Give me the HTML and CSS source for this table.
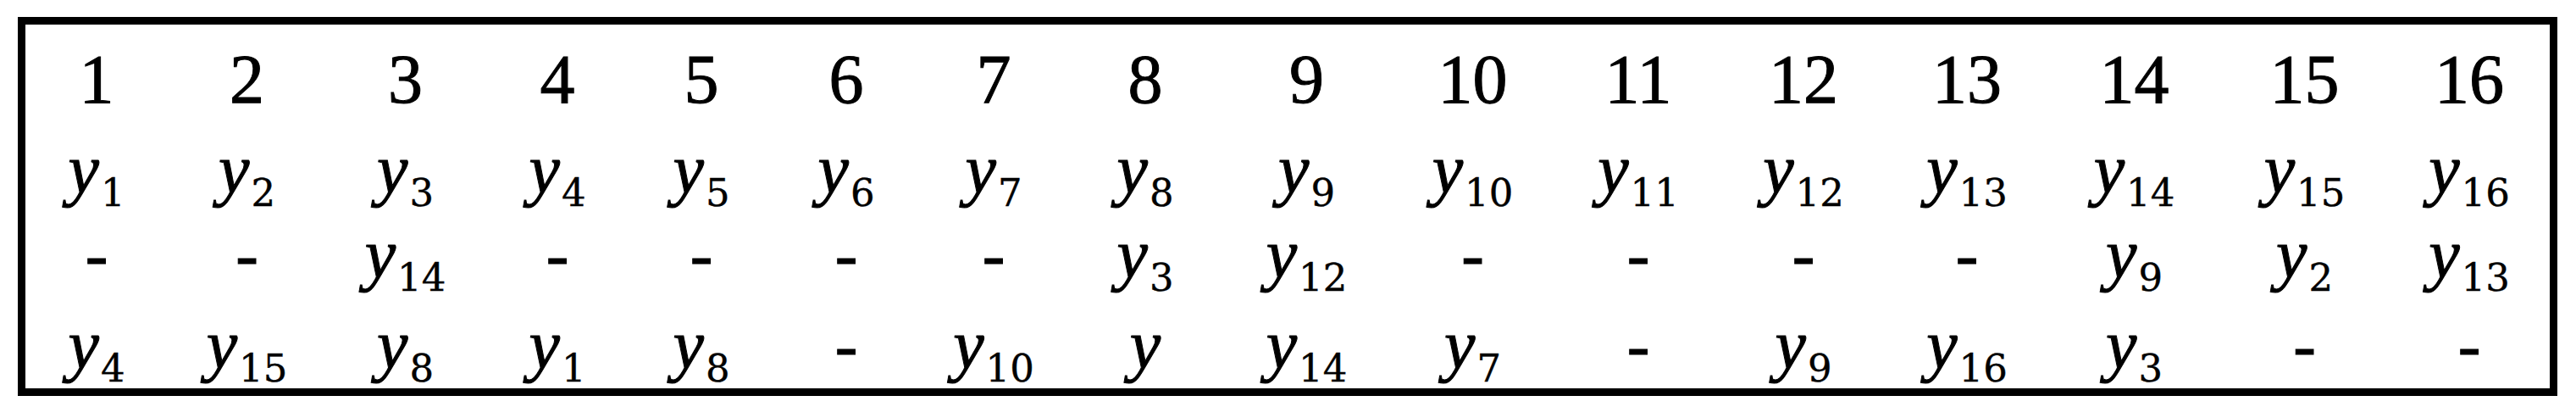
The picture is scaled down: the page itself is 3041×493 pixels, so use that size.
FILE: index.html
```html
<!DOCTYPE html>
<html lang="en">
<head>
<meta charset="utf-8">
<title>Table</title>
<link rel="stylesheet" href="styles.css">
</head>
<body>
<div class="frame">
  <div class="grid">
    <div class="row row-head">
      <div class="cell">1</div><div class="cell">2</div><div class="cell">3</div><div class="cell">4</div>
      <div class="cell">5</div><div class="cell">6</div><div class="cell">7</div><div class="cell">8</div>
      <div class="cell">9</div><div class="cell">10</div><div class="cell">11</div><div class="cell">12</div>
      <div class="cell">13</div><div class="cell">14</div><div class="cell">15</div><div class="cell">16</div>
    </div>
    <div class="row row-2">
      <div class="cell"><i class="v">y</i><span class="s">1</span></div>
      <div class="cell"><i class="v">y</i><span class="s">2</span></div>
      <div class="cell"><i class="v">y</i><span class="s">3</span></div>
      <div class="cell"><i class="v">y</i><span class="s">4</span></div>
      <div class="cell"><i class="v">y</i><span class="s">5</span></div>
      <div class="cell"><i class="v">y</i><span class="s">6</span></div>
      <div class="cell"><i class="v">y</i><span class="s">7</span></div>
      <div class="cell"><i class="v">y</i><span class="s">8</span></div>
      <div class="cell"><i class="v">y</i><span class="s">9</span></div>
      <div class="cell"><i class="v">y</i><span class="s">10</span></div>
      <div class="cell"><i class="v">y</i><span class="s">11</span></div>
      <div class="cell"><i class="v">y</i><span class="s">12</span></div>
      <div class="cell"><i class="v">y</i><span class="s">13</span></div>
      <div class="cell"><i class="v">y</i><span class="s">14</span></div>
      <div class="cell"><i class="v">y</i><span class="s">15</span></div>
      <div class="cell"><i class="v">y</i><span class="s">16</span></div>
    </div>
    <div class="row row-3">
      <div class="cell">-</div>
      <div class="cell">-</div>
      <div class="cell"><i class="v">y</i><span class="s">14</span></div>
      <div class="cell">-</div>
      <div class="cell">-</div>
      <div class="cell">-</div>
      <div class="cell">-</div>
      <div class="cell"><i class="v">y</i><span class="s">3</span></div>
      <div class="cell"><i class="v">y</i><span class="s">12</span></div>
      <div class="cell">-</div>
      <div class="cell">-</div>
      <div class="cell">-</div>
      <div class="cell">-</div>
      <div class="cell"><i class="v">y</i><span class="s">9</span></div>
      <div class="cell"><i class="v">y</i><span class="s">2</span></div>
      <div class="cell"><i class="v">y</i><span class="s">13</span></div>
    </div>
    <div class="row row-4">
      <div class="cell"><i class="v">y</i><span class="s">4</span></div>
      <div class="cell"><i class="v">y</i><span class="s">15</span></div>
      <div class="cell"><i class="v">y</i><span class="s">8</span></div>
      <div class="cell"><i class="v">y</i><span class="s">1</span></div>
      <div class="cell"><i class="v">y</i><span class="s">8</span></div>
      <div class="cell">-</div>
      <div class="cell"><i class="v">y</i><span class="s">10</span></div>
      <div class="cell"><i class="v">y</i></div>
      <div class="cell"><i class="v">y</i><span class="s">14</span></div>
      <div class="cell"><i class="v">y</i><span class="s">7</span></div>
      <div class="cell">-</div>
      <div class="cell"><i class="v">y</i><span class="s">9</span></div>
      <div class="cell"><i class="v">y</i><span class="s">16</span></div>
      <div class="cell"><i class="v">y</i><span class="s">3</span></div>
      <div class="cell">-</div>
      <div class="cell">-</div>
    </div>
  </div>
</div>
</body>
</html>
```

FILE: styles.css
```css
html, body {
  margin: 0;
  padding: 0;
  background: #ffffff;
}

body {
  font-family: "Liberation Serif", "Times New Roman", serif;
  color: #000000;
  -webkit-text-stroke: 1px #000000;
}

.frame {
  box-sizing: border-box;
  width: 2998px;
  height: 447px;
  margin: 20px 0 0 21px;
  border: 9px solid #000000;
}

.grid {
  display: grid;
  grid-template-columns: 168px 187px 187px 172px 168px 174px 174px 184px 197px 195px 196px 194px 192px 203px 199px 190px;
  grid-template-rows: 130px 82px 118px 96px;
}

.row {
  display: contents;
  font-size: 80px;
}

.row-head { font-size: 82px; line-height: 130px; }
.row-2 { line-height: 82px; }
.row-3 { line-height: 118px; }
.row-4 { line-height: 96px; }

.cell {
  text-align: center;
  white-space: nowrap;
}

.v {
  font-style: italic;
  font-size: 82px;
}

.s {
  font-family: "DejaVu Serif", "Liberation Serif", serif;
  font-size: 45px;
  line-height: 0;
  vertical-align: -16px;
  margin-left: 2px;
  -webkit-text-stroke: 0.4px #000000;
}
```
